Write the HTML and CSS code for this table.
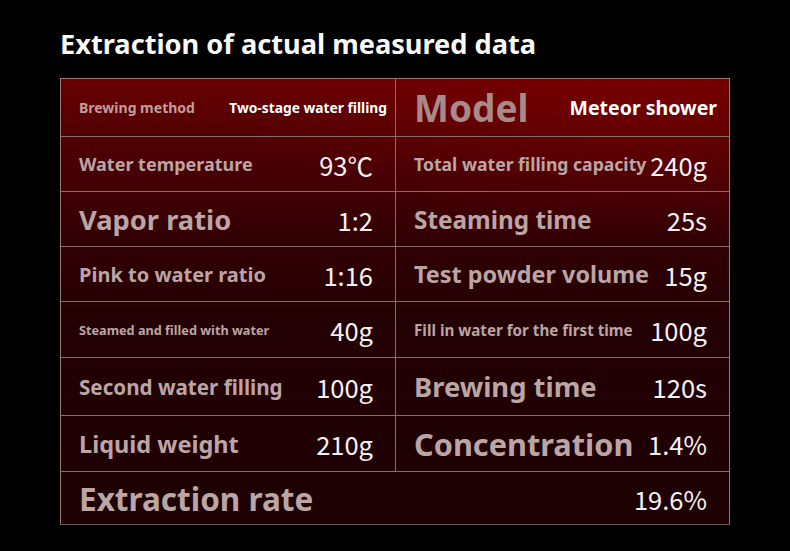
FILE: index.html
```html
<!DOCTYPE html>
<html lang="en">
<head>
<meta charset="utf-8">
<title>Extraction of actual measured data</title>
<link rel="stylesheet" href="styles.css">
</head>
<body>
<main class="page">
  <h1 class="title">Extraction of actual measured data</h1>
  <section class="sheet">
    <div class="row r1">
      <div class="cell head-left">
        <span class="lbl head-lbl">Brewing method</span>
        <span class="head-val">Two-stage water filling</span>
      </div>
      <div class="cell head-right">
        <span class="lbl model">Model</span>
        <span class="model-val">Meteor shower</span>
      </div>
    </div>
    <div class="row r2">
      <div class="cell"><span class="lbl s-water-temp">Water temperature</span><span class="val">93℃</span></div>
      <div class="cell"><span class="lbl s-total">Total water filling capacity</span><span class="val">240g</span></div>
    </div>
    <div class="row r3">
      <div class="cell"><span class="lbl s-vapor">Vapor ratio</span><span class="val">1:2</span></div>
      <div class="cell"><span class="lbl s-steam">Steaming time</span><span class="val">25s</span></div>
    </div>
    <div class="row r4">
      <div class="cell"><span class="lbl s-pink">Pink to water ratio</span><span class="val">1:16</span></div>
      <div class="cell"><span class="lbl s-test">Test powder volume</span><span class="val">15g</span></div>
    </div>
    <div class="row r5">
      <div class="cell"><span class="lbl s-steamed">Steamed and filled with water</span><span class="val">40g</span></div>
      <div class="cell"><span class="lbl s-first">Fill in water for the first time</span><span class="val">100g</span></div>
    </div>
    <div class="row r6">
      <div class="cell"><span class="lbl s-second">Second water filling</span><span class="val">100g</span></div>
      <div class="cell"><span class="lbl s-brew">Brewing time</span><span class="val">120s</span></div>
    </div>
    <div class="row r7">
      <div class="cell"><span class="lbl s-liquid">Liquid weight</span><span class="val">210g</span></div>
      <div class="cell"><span class="lbl s-conc">Concentration</span><span class="val">1.4%</span></div>
    </div>
    <div class="row r8 full">
      <div class="cell"><span class="lbl s-extr">Extraction rate</span><span class="val">19.6%</span></div>
    </div>
  </section>
</main>
</body>
</html>
```
FILE: styles.css
```css
html, body {
  margin: 0;
  padding: 0;
  background: #000;
}
.page {
  width: 790px;
  height: 551px;
  padding: 28px 0 0 60px;
  box-sizing: border-box;
  font-family: "Noto Sans", "Noto Sans CJK SC", sans-serif;
}
.title {
  margin: 0 0 18px;
  font-size: 27.2px;
  line-height: 32px;
  font-weight: 700;
  color: #fafafa;
  letter-spacing: 0;
}
.sheet {
  width: 670px;
  box-sizing: border-box;
  border: 1px solid #9a7676;
  border-bottom-color: #6e5656;
  background:
    radial-gradient(ellipse 420px 160px at 88% 0%, rgba(140, 0, 0, 0.45), rgba(140, 0, 0, 0) 100%),
    linear-gradient(to bottom, #670002 0%, #4a0004 18%, #320004 36%, #230003 55%, #1d0203 100%);
}
.row {
  display: grid;
  grid-template-columns: 335px 1fr;
  border-bottom: 1px solid #8a6a6a;
}
.row.full {
  grid-template-columns: 1fr;
  border-bottom: 0;
}
.r1 { height: 57px; }
.r2 { height: 54px; }
.r3 { height: 54px; }
.r4 { height: 54px; }
.r5 { height: 55px; }
.r6 { height: 57px; }
.r7 { height: 55px; }
.r8 { height: 52px; }
.cell {
  display: flex;
  align-items: center;
  justify-content: space-between;
  padding: 0 22px 0 18px;
  min-width: 0;
  white-space: nowrap;
}
.cell.head-left { padding-right: 8px; }
.cell.head-right { padding-right: 12px; }
.row .cell:first-child {
  border-right: 1px solid #8a6a6a;
}
.row.full .cell:first-child {
  border-right: 0;
}
.lbl {
  font-weight: 700;
  color: #bba5a5;
}
.val {
  font-family: "Noto Sans CJK SC", sans-serif;
  font-weight: 400;
  color: #f6f2f2;
  font-size: 25.5px;
}
.head-lbl { font-size: 14px; color: #c49c9c; }
.head-val { font-size: 13.8px; font-weight: 700; color: #ffffff; }
.model { font-size: 37px; color: #a88a8a; }
.model-val { font-size: 19.5px; font-weight: 700; color: #ffffff; }
.s-water-temp { font-size: 18px; }
.s-total { font-size: 17.6px; }
.s-vapor { font-size: 27.3px; }
.s-steam { font-size: 24.3px; }
.s-pink { font-size: 20px; }
.s-test { font-size: 23.4px; }
.s-steamed { font-size: 12.7px; }
.s-first { font-size: 15.2px; }
.s-second { font-size: 20.6px; }
.s-brew { font-size: 27.4px; }
.s-liquid { font-size: 23.5px; }
.s-conc { font-size: 30.7px; }
.s-extr { font-size: 31.5px; }
```
